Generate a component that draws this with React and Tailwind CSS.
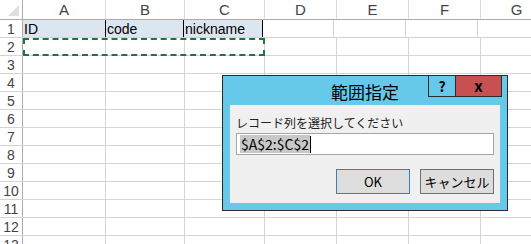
import React from 'react'

const cols = [
  { k: 'A', w: 'w-[83px]' },
  { k: 'B', w: 'w-[79px]' },
  { k: 'C', w: 'w-[80px]' },
  { k: 'D', w: 'w-[72px]' },
  { k: 'E', w: 'w-[72px]' },
  { k: 'F', w: 'w-[72px]' },
  { k: 'G', w: 'w-[72px]' },
]

const row1 = ['ID', 'code', 'nickname']
const rows = [1, 2, 3, 4, 5, 6, 7, 8, 9, 10, 11, 12, 13]

export default function App() {
  return (
    <div className="relative w-[531px] h-[244px] overflow-hidden bg-white text-[#222]"
      style={{ fontFamily: '"Noto Sans CJK JP", "Liberation Sans", sans-serif' }}>

      {/* column header */}
      <div className="flex h-[20px] border-b border-[#ababab] bg-white font-['Liberation_Sans',sans-serif]">
        <div className="relative w-[23px] shrink-0 border-r border-[#ababab]">
          <div className="absolute right-[3px] bottom-[3px] w-0 h-0 border-l-[11px] border-l-transparent border-b-[11px] border-b-[#dfdfdf]"></div>
        </div>
        {cols.map(c => (
          <div key={c.k} className={`${c.w} shrink-0 border-r border-[#dadada] flex items-center justify-center text-[15px] leading-[17px] text-[#444]`}>{c.k}</div>
        ))}
      </div>

      {rows.map(r => (
        <div key={r} className="flex h-[18px] border-b border-[#d4d4d4] font-['Liberation_Sans',sans-serif]">
          <div className="w-[23px] shrink-0 border-r border-[#ababab] flex items-center justify-center text-[14px] leading-[16px] text-[#444]">{r}</div>
          {cols.map((c, i) => (
            <div key={c.k}
              className={`${c.w} shrink-0 border-r border-[#d4d4d4] flex items-center text-[14px] leading-[16px] text-black pl-[1px] ${r === 1 && i < 3 ? 'bg-[#dce6f1]' : ''} ${r === 1 && i > 0 && i < 4 ? 'border-l-[1px] border-l-black -ml-[1px]' : ''}`}>
              {r === 1 && i < 3 ? row1[i] : ''}
            </div>
          ))}
        </div>
      ))}

      {/* copy marquee on row 2 */}
      <div className="absolute left-[23px] top-[38px] w-[242px] h-[18px] border-2 border-dashed border-[#217346]"></div>

      {/* dialog */}
      <div className="absolute left-[222px] top-[75px] w-[286px] h-[136px] border border-[#2b2b2b] bg-[#66c9ea] flex flex-col">
        <div className="relative h-[29px] flex items-center justify-center">
          <span className="text-[17px] leading-[20px] text-black mt-[2px]">範囲指定</span>
          <div className="absolute right-[5px] top-[-1px] flex h-[22px] border border-[#2b2b2b]">
            <div className="w-[27px] flex items-center justify-center border-r border-[#2b2b2b] text-[14px] font-bold text-black">?</div>
            <div className="w-[45px] bg-[#c75050] flex items-center justify-center text-[15px] font-bold text-black">x</div>
          </div>
        </div>
        <div className="mx-[7px] mb-[7px] flex-1 bg-[#f0f0f0] px-[6px] flex flex-col">
          <div className="mt-[10px] h-[16px] text-[12px] leading-[16px] text-[#222]">レコード列を選択してください</div>
          <div className="mt-[2px] h-[22px] border border-[#a5a5a5] bg-white flex items-center pl-[3px]">
            <span className="bg-[#c8c8c8] text-[14px] leading-[18px] text-black px-[1px]">$A$2:$C$2</span>
            <span className="w-px h-[17px] bg-black"></span>
          </div>
          <div className="mt-[14px] flex justify-end gap-[10px]">
            <button className="w-[74px] h-[25px] border border-[#3c7fb1] bg-[#dddddd] text-[13px] text-black">OK</button>
            <button className="w-[74px] h-[25px] border border-[#707070] bg-[#dddddd] text-[13px] text-black">キャンセル</button>
          </div>
        </div>
      </div>
    </div>
  )
}
